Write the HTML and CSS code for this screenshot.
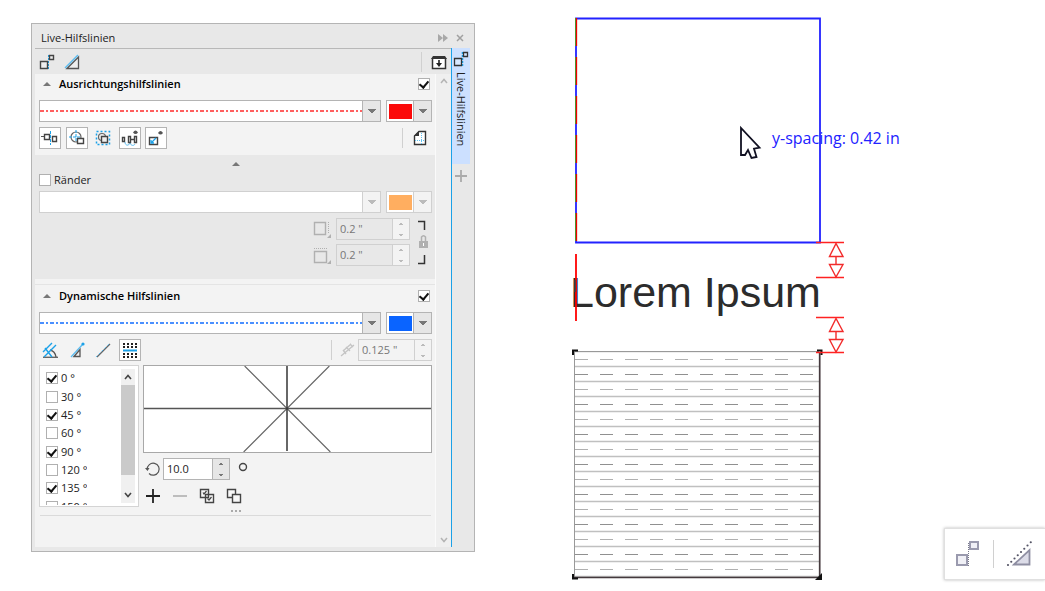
FILE: index.html
```html
<!DOCTYPE html>
<html lang="de">
<head>
<meta charset="utf-8">
<title>Live-Hilfslinien</title>
<link rel="stylesheet" href="styles.css">
</head>
<body>
<main class="page">
  <section class="docker" aria-label="Live-Hilfslinien">
    <header class="titlebar">
      <span class="title">Live-Hilfslinien</span>
      <button class="plain" aria-label="Reduzieren"><svg width="10" height="8"><path d="M0 0l5 4-5 4zM5 0l5 4-5 4z" fill="#a8a8a8"/></svg></button>
      <button class="plain" aria-label="Schließen"><svg width="8" height="8"><path d="M1 1l6 6M7 1L1 7" stroke="#a0a0a0" stroke-width="1.5"/></svg></button>
    </header>
    <div class="main">
      <div class="toolbar">
        <button class="plain" aria-label="Ausrichtungshilfslinien"><svg width="16" height="16"><path d="M9.500 1v14" stroke="#1ba1e8" stroke-dasharray="2 1"/><path d="M1.500 7.500h7v7h-7zM10.500 1.500h4v4h-4z" fill="#eee" stroke="#444" stroke-width="1.400"/></svg></button>
        <button class="plain" aria-label="Dynamische Hilfslinien"><svg width="16" height="16"><path d="M1 14L14 1" stroke="#5bbcf0" stroke-width="1.500"/><path d="M3 14.500L14.500 3v11.500z" fill="#eee" stroke="#555" stroke-width="1.300"/></svg></button>
        <span class="rule push"></span>
        <button class="plain" aria-label="Optionen"><svg width="16" height="16"><path d="M1.500 4v10.500h13V4" fill="#fff" stroke="#333" stroke-width="1.500"/><path d="M0 5l2-3h12l2 3z" fill="#333"/><path d="M8 6v5" stroke="#222" stroke-width="1.600"/><path d="M5 9h6l-3 4z" fill="#222"/></svg></button>
      </div>
      <div class="body">
        <div class="content">
          <section class="group align">
            <div class="heading"><span class="up"></span><label for="g1">Ausrichtungshilfslinien</label><input type="checkbox" id="g1" checked></div>
            <div class="row">
              <div class="combo wide"><select class="line red" aria-label="Linienart"><option></option></select></div>
              <div class="combo color"><select class="swatch red" aria-label="Farbe"><option></option></select></div>
            </div>
            <div class="row tools">
              <div class="set five">
                <button class="tool on" aria-label="Objektmitte"><svg width="18" height="18"><path d="M0 7.500h3" stroke="#555"/><path d="M3.500 5.500h5v5h-5zM11.500 7.500h4v5h-4z" fill="#fff" stroke="#444" stroke-width="1.400"/><path d="M9.500 2v14" stroke="#1ba1e8" stroke-dasharray="3 1"/></svg></button>
                <button class="tool on" aria-label="Kreis"><svg width="18" height="18"><circle cx="8" cy="8" r="5" fill="none" stroke="#666" stroke-width="1.200"/><path d="M8 1v12M1 8h12" stroke="#1ba1e8" stroke-dasharray="3 1"/><path d="M9.500 9.500h6v5h-6z" fill="#fff" stroke="#444" stroke-width="1.400"/></svg></button>
                <button class="tool" aria-label="Gruppe"><svg width="18" height="18"><path d="M2.500 2.500h13v13h-13z" fill="none" stroke="#1ba1e8" stroke-width="1.500" stroke-dasharray="2 2"/><circle cx="8" cy="8" r="3.500" fill="none" stroke="#666" stroke-width="1.200"/><path d="M7.500 7.500h6v6h-6z" fill="#eee" stroke="#444" stroke-width="1.400"/></svg></button>
                <button class="tool on" aria-label="Abstand"><svg width="18" height="18"><path d="M4 13c0 4 4 4 5 1M9 14c1 3 4 3 5 1" fill="none" stroke="#5bbcf0"/><path d="M1.500 8.500h2v4h-2zM7.500 7.500h2v6h-2zM13.500 7.500h2v6h-2zM10 10.500h4" fill="#fff" stroke="#444" stroke-width="1.400"/><path d="M12 3.500q2.500-4 5 0-2.500 3-5 0z" fill="#555"/></svg></button>
                <button class="tool on" aria-label="Abmessung"><svg width="18" height="18"><path d="M2.500 8.500h8v7h-8z" fill="#fff" stroke="#444" stroke-width="1.400"/><path d="M4 14l5-5M4 11v3h3" fill="none" stroke="#1ba1e8" stroke-width="1.300"/><path d="M11 4q2.500-4 5 0-2.500 3-5 0z" fill="#555"/></svg></button>
              </div>
              <span class="rule push"></span>
              <button class="plain page-icon" aria-label="Seite"><svg width="14" height="16"><path d="M1.500 6l4.500-4.500h6.500v13h-11z" fill="#fff" stroke="#333" stroke-width="1.400"/><path d="M1 6h5V1z" fill="#333"/><path d="M8.500 3v11M2 10.500h10" stroke="#5bc0f0" stroke-dasharray="1 1"/></svg></button>
            </div>
          </section>
          <section class="margins">
            <span class="up center"></span>
            <label class="check"><input type="checkbox">Ränder</label>
            <div class="row">
              <div class="combo wide off"><select disabled aria-label="Linienart der Ränder"><option></option></select></div>
              <div class="combo color off"><select class="swatch orange" disabled aria-label="Farbe der Ränder"><option></option></select></div>
            </div>
            <div class="offsets">
              <div class="fields">
                <div class="field"><svg width="18" height="18"><path d="M1.500 2.500h11v12h-11z" fill="none" stroke="#b0b0b0" stroke-width="1.400"/><path d="M15.500 2v12" stroke="#b0b0b0" stroke-dasharray="1 1"/><path d="M18 14v4h-4z" fill="#b0b0b0"/></svg><div class="spin off"><input disabled value='0.2 "' aria-label="Horizontaler Abstand"><i></i></div></div>
                <div class="field"><svg width="18" height="18"><path d="M1.500 5.500h12v11h-12z" fill="none" stroke="#b0b0b0" stroke-width="1.400"/><path d="M1 2.500h14" stroke="#b0b0b0" stroke-dasharray="1 1"/><path d="M18 14v4h-4z" fill="#b0b0b0"/></svg><div class="spin off"><input disabled value='0.2 "' aria-label="Vertikaler Abstand"><i></i></div></div>
              </div>
              <svg class="lock" width="12" height="48"><path d="M0 3.500h6.500V12M0 45.500h6.500V37" fill="none" stroke="#333" stroke-width="1.500"/><path d="M1 23h9v7H1z" fill="#b0b0b0"/><path d="M3.500 23v-4q2-2.500 4 0V23" fill="none" stroke="#b0b0b0" stroke-width="1.500"/><path d="M5.500 25v3" stroke="#fff"/></svg>
            </div>
          </section>
          <section class="group dynamic">
            <div class="heading"><span class="up"></span><label for="g2">Dynamische Hilfslinien</label><input type="checkbox" id="g2" checked></div>
            <div class="row">
              <div class="combo wide"><select class="line blue" aria-label="Linienart"><option></option></select></div>
              <div class="combo color"><select class="swatch blue" aria-label="Farbe"><option></option></select></div>
            </div>
            <div class="row tools">
              <div class="set four">
                <button class="tool" aria-label="Winkel"><svg width="18" height="18"><path d="M2 16.300h15" stroke="#666" stroke-width="1.400"/><path d="M9 9q5 1 6 7" fill="none" stroke="#555" stroke-width="1.300"/><path d="M3 16L15 4M2 11l9-9M4 7l7 9" fill="none" stroke="#1ba1e8" stroke-width="1.400"/></svg></button>
                <button class="tool" aria-label="Tangente"><svg width="18" height="18"><path d="M3 16L15 3" stroke="#5bbcf0" stroke-width="1.300"/><circle cx="15" cy="3" r="1.600" fill="#1ba1e8"/><path d="M6 15.500l6-7v7z" fill="#eee" stroke="#555" stroke-width="1.300"/></svg></button>
                <button class="tool" aria-label="Segment"><svg width="18" height="18"><path d="M3 16L16 3" stroke="#666" stroke-width="1.200"/><path d="M2 16L15 3" stroke="#5bbcf0" stroke-dasharray="2 2"/></svg></button>
                <button class="tool on" aria-label="Rastern"><svg width="18" height="18"><path d="M2 3h14M2 6h14M2 13h14M2 16h14" stroke="#222" stroke-width="2" stroke-dasharray="2 2"/><path d="M2 9.500h14" stroke="#1ba1e8" stroke-width="2"/></svg></button>
              </div>
              <span class="rule push"></span>
              <svg class="step" width="16" height="16"><path d="M1 14L14 3M3 9l8-7M3 8l3 4M6 5l4 4M10 2l3 3" stroke="#c4c4c4" stroke-width="1.300"/></svg>
              <div class="spin off pale"><input disabled value='0.125 "' aria-label="Rasterweite"><i></i></div>
            </div>
            <div class="angles">
              <div class="list">
                <div class="clip"><div class="items">
                  <label><input type="checkbox" checked>0 °</label>
                  <label><input type="checkbox">30 °</label>
                  <label><input type="checkbox" checked>45 °</label>
                  <label><input type="checkbox">60 °</label>
                  <label><input type="checkbox" checked>90 °</label>
                  <label><input type="checkbox">120 °</label>
                  <label><input type="checkbox" checked>135 °</label>
                  <label><input type="checkbox">150 °</label>
                </div></div>
                <div class="scroll small">
                  <svg width="8" height="6"><path d="M1 5l3-3.500L7 5" fill="none" stroke="#444" stroke-width="1.600"/></svg>
                  <span class="thumb"></span>
                  <svg width="8" height="6"><path d="M1 1l3 3.500L7 1" fill="none" stroke="#444" stroke-width="1.600"/></svg>
                </div>
              </div>
              <div class="side">
                <svg class="preview" viewBox="0 0 288 86" preserveAspectRatio="none"><path d="M101 0l86 86M186 0l-86 86" stroke="#666" stroke-width="1.200"/><path d="M0 42.500h288" stroke="#555" stroke-width="1.500"/><path d="M143.500 0v85" stroke="#333" stroke-width="1.500"/></svg>
                <div class="row edit">
                  <svg width="16" height="16"><path d="M4 12.500A6 6 0 1 0 2.200 8.500" fill="none" stroke="#555" stroke-width="1.200"/><path d="M0 7h4.500L2.500 10z" fill="#555"/></svg>
                  <div class="spin short"><input value="10.0" aria-label="Winkel"><i></i></div>
                  <svg class="degree" width="10" height="10"><circle cx="5" cy="5" r="3.500" fill="none" stroke="#444" stroke-width="1.400"/></svg>
                </div>
                <div class="row actions">
                  <button class="plain" aria-label="Hinzufügen"><svg width="16" height="16"><path d="M1 8h14M8 1v14" stroke="#222" stroke-width="1.800"/></svg></button>
                  <button class="plain" aria-label="Entfernen"><svg width="16" height="16"><path d="M1 8h14" stroke="#b0b0b0" stroke-width="1.600"/></svg></button>
                  <button class="plain" aria-label="Alle auswählen"><svg width="16" height="16"><path d="M1.500 1.500h8v8h-8zM6.500 6.500h8v8h-8z" fill="#f7f7f7" stroke="#444" stroke-width="1.400"/><path d="M4 4.500l1 1.500 2.500-3M8.500 10.500l1.500 1.500 2.500-3" fill="none" stroke="#444" stroke-width="1.200"/></svg></button>
                  <button class="plain" aria-label="Auswahl aufheben"><svg width="16" height="16"><path d="M1.500 1.500h8v8h-8z" fill="#f7f7f7" stroke="#444" stroke-width="1.400"/><path d="M6.500 6.500h8v8h-8z" fill="#f7f7f7" stroke="#444" stroke-width="1.400"/></svg></button>
                </div>
              </div>
            </div>
            <svg class="grip" width="10" height="2"><path d="M0 1h10" stroke="#aaa" stroke-width="2" stroke-dasharray="2 2"/></svg>
            <hr>
          </section>
        </div>
        <div class="scroll outer">
          <svg width="8" height="6"><path d="M1 5l3-3.500L7 5" fill="none" stroke="#b4b4b4" stroke-width="1.500"/></svg>
          <svg width="8" height="6"><path d="M1 1l3 3.500L7 1" fill="none" stroke="#b4b4b4" stroke-width="1.500"/></svg>
        </div>
      </div>
    </div>
    <nav class="tabs">
      <button class="tab"><svg width="16" height="16"><path d="M9.500 1v14" stroke="#1ba1e8" stroke-width="1.500" stroke-dasharray="2 1"/><path d="M1.500 7.500h7v7h-7zM10.500 1.500h4v4h-4z" fill="#d8e8ff" stroke="#333" stroke-width="1.300"/></svg><span>Live-Hilfslinien</span></button>
      <button class="plain" aria-label="Andockfenster hinzufügen"><svg width="12" height="12"><path d="M0 6h12M6 0v12" stroke="#aaa" stroke-width="1.800"/></svg></button>
    </nav>
  </section>
  <section class="canvas" aria-label="Zeichenfläche">
    <svg class="drawing" width="345" height="591" viewBox="565 0 345 591">
      <defs>
        <pattern id="hatch" x="575" y="359" width="25" height="30" patternUnits="userSpaceOnUse">
          <path d="M0 .5h13" stroke="#b0b0b0"/><path d="M0 15.500h13" stroke="#909090"/><path d="M0 7.500h25M0 22.500h25" stroke="#c0c0c0" stroke-width="1.400"/>
        </pattern>
        <g id="gap" fill="#fff" stroke="#f22b2b" stroke-width="1.400">
          <path d="M836 1.500l-6.500 13h13.500zM836 35l-6.500-12.500h13.500zM836 14.500v8"/>
          <path d="M816 .5h28M816 35.500h28" stroke="#f22" stroke-width="1.500"/>
        </g>
      </defs>
      <path d="M576 18.500h244v224H576z" fill="#fff" stroke="#22f" stroke-width="1.800"/>
      <path d="M575.500 18v225" stroke="#3a3" stroke-dasharray="28 11"/>
      <path d="M576.500 18v225" stroke="#f00000" stroke-width="1.300" stroke-dasharray="28 11"/>
      <path d="M741 128v27h4l3-5 3.500 8 5-1-2.500-8.300 5.500-1z" fill="#fff" stroke="#112" stroke-width="1.800"/>
      <text class="hint" x="772" y="144">y-spacing: 0.42 in</text>
      <text class="lorem" x="570" y="307">Lorem Ipsum</text>
      <path d="M576 254v67" stroke="#f00" stroke-width="1.800"/>
      <path d="M575 280v12" stroke="#344" stroke-width="1.500"/>
      <rect x="575" y="352" width="244" height="225" fill="url(#hatch)"/>
      <path d="M574.500 577V351.500H819" fill="none" stroke="#999"/>
      <path d="M574 577.500h246M819.700 352v226" stroke="#453a3e" stroke-width="1.700"/>
      <path d="M573 355v-4.500h5M817 350.500h4.500V355M573 574v4.500h5" fill="none" stroke="#111" stroke-width="2"/>
      <path d="M822 573v7h-7z" fill="#111"/>
      <use href="#gap" y="242"/><use href="#gap" y="317"/>
    </svg>
    <div class="floating">
      <button class="plain" aria-label="Ausrichtungshilfslinien"><svg width="26" height="28"><path d="M2 15h10v10H2zM15 2h8v7h-8z" fill="#f0f0f6" stroke="#9a9aae" stroke-width="2"/><path d="M13.500 3v23" stroke="#778" stroke-dasharray="1 1"/></svg></button>
      <span class="rule"></span>
      <button class="plain" aria-label="Dynamische Hilfslinien"><svg width="26" height="26"><path d="M8 23.500L23.500 9v14.500z" fill="#dcdce8" stroke="#8e8ea2" stroke-width="1.800"/><path d="M2 24L25 1" stroke="#556" stroke-width="2.200" stroke-linecap="round" stroke-dasharray="0 4.600"/></svg></button>
    </div>
  </section>
</main>
</body>
</html>
```

FILE: styles.css
```css
* { box-sizing: border-box; }
body { margin: 0; background: #fff; color: #222; font: 11px/16px "Open Sans", "Noto Sans", sans-serif; }
svg { display: block; flex: none; }
button, input, select { font: inherit; color: inherit; margin: 0; }
button { display: grid; place-items: center; padding: 0; }
.page { display: grid; grid-template-columns: minmax(0, 444fr) minmax(0, 570fr); align-items: start; min-height: 100vh; padding-left: 31px; }

.docker { display: grid; grid-template: 24px auto / minmax(0, 1fr) 23px; margin-top: 23px; padding: 0 0 4px 3px; background: #e8e8e8; border: 1px solid #b4b4b4; }
.titlebar { grid-column: 1 / 3; display: flex; align-items: center; gap: 8px; padding: 3px 10px 0 6px; }
.title { margin-right: auto; }
.plain { background: none; border: 0; }
.main { border-top: 1px solid #b8b8b8; }
.toolbar { display: flex; align-items: center; gap: 9px; height: 25px; padding: 0 4px; }
.rule { flex: none; width: 1px; height: 20px; background: #d0d0d0; }
.push { margin-left: auto; }
.body { display: grid; grid-template-columns: minmax(0, 1fr) 16px; background: #f3f3f3; }
.content { min-width: 0; }
.group { padding: 0 3px 0 4px; }
.align { padding-bottom: 6px; }
.heading { display: flex; align-items: center; height: 20px; padding: 0 2px 0 4px; font-weight: 600; color: #000; }
.heading label { margin: 0 auto 0 8px; }
.up { width: 0; border: 4px solid transparent; border-top: 0; border-bottom: 4px solid #777; }
.row { display: flex; align-items: center; gap: 5px; }
.heading + .row { margin-top: 6px; }

input[type="checkbox"] { appearance: none; flex: none; width: 12px; height: 12px; background: #fff; border: 1px solid #b0b0b0; display: grid; place-items: center; }
input[type="checkbox"]:checked::after { content: ""; width: 4px; height: 7px; margin-bottom: 2px; border: solid #111; border-width: 0 2px 2px 0; transform: rotate(40deg); }

.combo { display: flex; height: 22px; background: #fff; border: 1px solid #b4b4b4; }
.wide { flex: 1; }
.color { flex: none; width: 46px; }
.combo select { appearance: none; flex: 1; min-width: 0; padding: 0; border: 0; border-radius: 0; background-color: #fff; background-repeat: no-repeat; background-position: center; opacity: 1; }
.combo::after { content: ""; width: 17px; border-left: 1px solid #b4b4b4; background-color: #e6e6e6; background-repeat: no-repeat; background-image: linear-gradient(#777, #777), linear-gradient(#777, #777), linear-gradient(#777, #777), linear-gradient(#777, #777); background-size: 8px 1px, 6px 1px, 4px 1px, 2px 1px; background-position: 50% 8px, 50% 9px, 50% 10px, 50% 11px; }
.combo .line { background-size: 100% 2px; }
.line.red { background-image: repeating-linear-gradient(90deg, #ff6060 0 4px, #fff 4px 6px, #ff6060 6px 8px, #fff 8px 10px); }
.line.blue { background-image: repeating-linear-gradient(90deg, #4a90ff 0 4px, #fff 4px 6px, #4a90ff 6px 8px, #fff 8px 10px); }
.combo .swatch { background-size: 23px 15px; }
.swatch.red { background-image: linear-gradient(#fb0a0a, #fb0a0a); }
.swatch.blue { background-image: linear-gradient(#0a64ff, #0a64ff); }
.swatch.orange { background-image: linear-gradient(#ffae60, #ffae60); }
.combo.off { border-color: #d0d0d0; }
.combo.off::after { border-color: #d0d0d0; background-color: #f3f3f3; background-image: linear-gradient(#bbb, #bbb), linear-gradient(#bbb, #bbb), linear-gradient(#bbb, #bbb), linear-gradient(#bbb, #bbb); }

.tools { margin-top: 5px; }
.set { display: flex; justify-content: space-between; }
.five { width: 128px; }
.four { width: 102px; }
.tool { width: 22px; height: 22px; border: 1px solid transparent; background: none; }
.tool.on { border-color: #b4b4b4; background: #fff; }
.page-icon { margin: 0 5px; }

.margins { height: 124px; padding: 7px 3px 0 4px; background: #e8e8e8; }
.up.center { display: block; margin: 0 auto; }
.check { display: flex; align-items: center; gap: 3px; height: 16px; margin-top: 6px; }
.margins .row { margin-top: 3px; }
.offsets { display: flex; justify-content: flex-end; align-items: center; gap: 8px; margin-top: 5px; padding-right: 2px; }
.fields { display: grid; gap: 4px; }
.field { display: flex; align-items: center; gap: 5px; }
.spin { display: flex; width: 74px; height: 22px; background: #fff; border: 1px solid #b4b4b4; }
.spin input { flex: 1; min-width: 0; padding: 0 3px; border: 0; background: none; }
.spin i { width: 17px; border-left: 1px solid #b4b4b4; background-color: #e6e6e6; background-repeat: no-repeat; background-image: linear-gradient(#777, #777), linear-gradient(#777, #777), linear-gradient(#777, #777), linear-gradient(#777, #777); background-size: 2px 1px, 4px 1px, 4px 1px, 2px 1px; background-position: 50% 4px, 50% 5px, 50% 15px, 50% 16px; }
.spin.off { border-color: #d0d0d0; color: #777; background: #e8e8e8; }
.spin.off i { border-color: #d0d0d0; background-color: #f3f3f3; background-image: linear-gradient(#bbb, #bbb), linear-gradient(#bbb, #bbb), linear-gradient(#bbb, #bbb), linear-gradient(#bbb, #bbb); }
.spin.pale { background: #f3f3f3; }
.spin.short { width: 67px; }

.dynamic { margin-top: 5px; padding-top: 1px; padding-bottom: 31px; border-top: 1px solid #e4e4e4; }
.step { margin-left: 3px; }
.step + .spin { margin-left: -3px; }
.angles { display: grid; grid-template-columns: 100px minmax(0, 1fr); gap: 4px; margin-top: 4px; }
.list { display: flex; justify-content: space-between; height: 142px; padding: 3px; background: #fff; border: 1px solid #d4d4d4; }
.clip { height: 136px; overflow: hidden; }
.items { display: grid; grid-template-rows: repeat(8, 1fr); height: 147px; padding-left: 3px; }
.items label { display: flex; align-items: center; gap: 3px; }
.scroll { display: flex; flex-direction: column; align-items: center; }
.small { width: 14px; padding: 5px 0; gap: 5px; background: #f0f0f0; }
.thumb { width: 14px; height: 90px; background: #cacaca; }
.small svg:last-child { margin-top: auto; }
.outer { justify-content: space-between; padding: 4px 0; background: #efefef; border-left: 1px solid #fafafa; }
.side { min-width: 0; }
.preview { width: 100%; height: 88px; background: #fff; border: 1px solid #a8a8a8; }
.edit { margin: 5px 0 0 2px; gap: 2px; }
.degree { margin: 0 0 5px 6px; }
.actions { margin: 8px 0 0 2px; gap: 11px; }
.grip { margin: 3px auto; }
hr { height: 1px; margin: 0 1px; border: 0; background: #dadada; }

.tabs { display: flex; flex-direction: column; align-items: flex-start; gap: 6px; border-left: 1px solid #1ba1e8; }
.tab { display: flex; flex-direction: column; width: 18px; height: 116px; padding-top: 3px; gap: 5px; border: 0; background: #cce0ff; line-height: 14px; }
.tab span { writing-mode: vertical-rl; }
.tabs .plain { margin-left: 3px; }

.canvas { display: flex; min-height: 100vh; padding-left: 90px; }
.hint { font: 16px "Open Sans", sans-serif; fill: #22f; }
.lorem { font: 43px "Liberation Sans", Arial, sans-serif; fill: #2c2c2c; }
.floating { align-self: flex-end; display: flex; align-items: center; gap: 12px; width: 101px; height: 52px; margin: 0 0 11px auto; padding-left: 10px; background: #fff; border: 1px solid #e0e0e0; border-right: 0; box-shadow: 0 0 3px #bbb; }
.floating .rule { height: 28px; }
```
